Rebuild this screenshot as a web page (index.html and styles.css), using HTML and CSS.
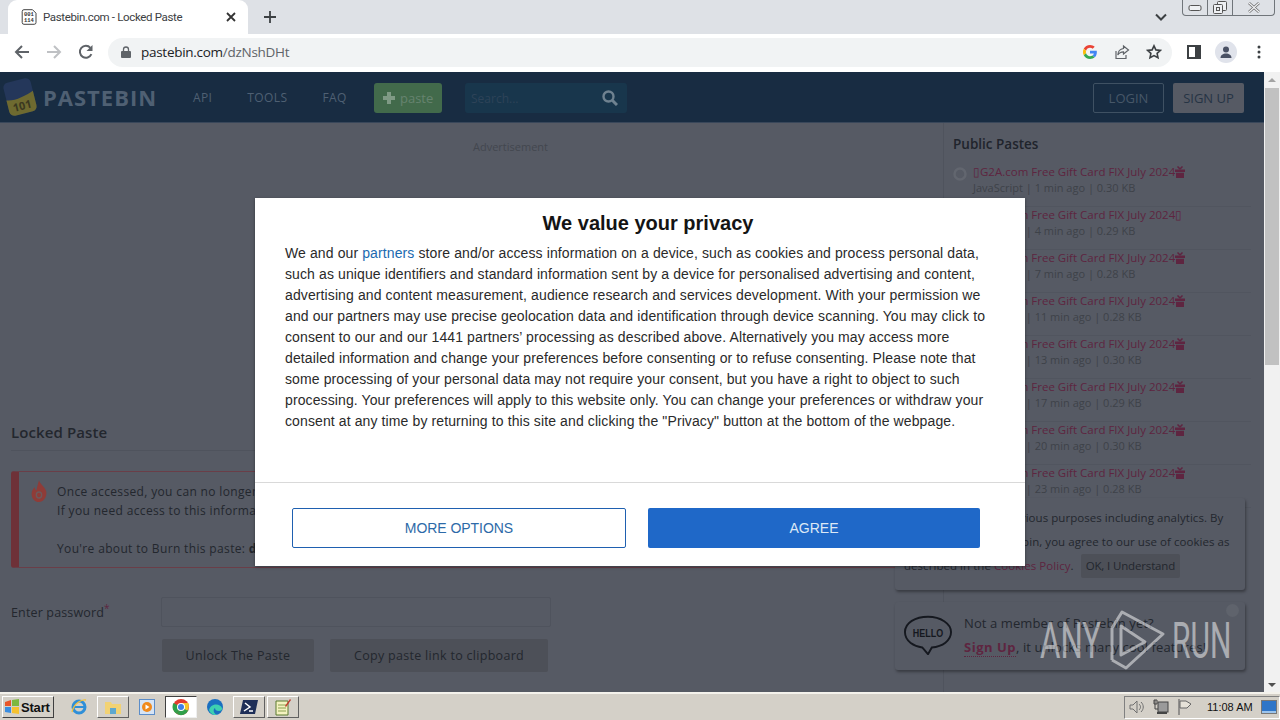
FILE: index.html
```html
<!DOCTYPE html>
<html lang="en">
<head>
<meta charset="utf-8">
<title>Pastebin.com - Locked Paste</title>
<link rel="stylesheet" href="styles.css">
</head>
<body>
<div class="tabbar">
  <div class="tab">
    <svg class="favicon" viewBox="0 0 16 16" width="16" height="16"><path d="M3 .7h8.500l3.500 3.500v9.300a1.800 1.800 0 0 1-1.800 1.800H3a1.800 1.800 0 0 1-1.800-1.800V2.500A1.800 1.800 0 0 1 3 .7z" fill="#fff" stroke="#444"/><text x="3" y="7" class="favtext">001</text><text x="3" y="13" class="favtext">114</text></svg>
    <span class="tab-title">Pastebin.com - Locked Paste</span>
    <svg class="tab-x" viewBox="0 0 10 10" width="10" height="10"><path d="M1 1l8 8M9 1l-8 8" stroke="#333" stroke-width="1.800"/></svg>
  </div>
  <svg class="plus" viewBox="0 0 12 12" width="12" height="12"><path d="M6 0v12M0 6h12" stroke="#3c4043" stroke-width="1.800"/></svg>
  <div class="tabbar-right">
    <svg class="chev" viewBox="0 0 12 8" width="12" height="8"><path d="M1 1.500l5 5 5-5" fill="none" stroke="#3c4043" stroke-width="2"/></svg>
    <div class="winctl">
      <div class="wc wc-min"><svg viewBox="0 0 14 6" width="14" height="6"><rect x="1" y=".5" width="12" height="5" rx="1.500" fill="#eef0f3" stroke="#555"/></svg></div>
      <div class="wc wc-max"><svg viewBox="0 0 14 13" width="14" height="13"><rect x="4.500" y=".5" width="9" height="9" rx="1" fill="#eef0f3" stroke="#555"/><rect x=".5" y="3.500" width="9" height="9" rx="1" fill="#eef0f3" stroke="#555"/><rect x="3.500" y="6.500" width="3" height="3" fill="none" stroke="#555"/></svg></div>
      <div class="wc wc-close"><svg viewBox="0 0 14 11" width="14" height="11"><path d="M2 1l10 9M12 1L2 10" stroke="#666" stroke-width="2.600"/><path d="M2 1l10 9M12 1L2 10" stroke="#f2f3f5" stroke-width="1.200"/></svg></div>
    </div>
  </div>
</div>
<div class="toolbar">
  <svg class="nav" viewBox="0 0 16 16" width="16" height="16"><path d="M15 8H2M8 2L2 8l6 6" fill="none" stroke="#5f6368" stroke-width="2"/></svg>
  <svg class="nav" viewBox="0 0 16 16" width="16" height="16"><path d="M1 8h13M8 2l6 6-6 6" fill="none" stroke="#bfc1c4" stroke-width="2"/></svg>
  <svg class="nav" viewBox="0 0 16 16" width="16" height="16"><path d="M13.400 10.200A6 6 0 1 1 12.400 3.800" fill="none" stroke="#5f6368" stroke-width="2"/><path d="M14.500 1v6h-6z" fill="#5f6368"/></svg>
  <div class="omnibox">
    <svg class="lock" viewBox="0 0 10 12" width="10" height="12"><path d="M2.500 5V3.500a2.500 2.500 0 0 1 5 0V5" fill="none" stroke="#5f6368" stroke-width="1.300"/><rect y="5" width="10" height="7" rx="1" fill="#5f6368"/></svg>
    <span class="url">pastebin.com<span class="url-path">/dzNshDHt</span></span>
    <svg class="g" viewBox="0 0 48 48" width="14" height="14"><path fill="#EA4335" d="M24 9.500c3.500 0 6.700 1.200 9.200 3.600l6.900-6.900C35.900 2.400 30.500 0 24 0 14.600 0 6.500 5.400 2.600 13.200l8 6.200C12.400 13.700 17.700 9.500 24 9.500z"/><path fill="#4285F4" d="M47.500 24.500c0-1.600-.1-3.100-.4-4.500H24v9h13.200c-.6 3-2.300 5.500-4.800 7.200l7.700 6c4.500-4.200 7.400-10.300 7.400-17.700z"/><path fill="#FBBC05" d="M10.600 28.600c-.5-1.400-.8-3-.8-4.600s.3-3.200.8-4.600l-8-6.200C.9 16.500 0 20.100 0 24s.9 7.500 2.600 10.800z"/><path fill="#34A853" d="M24 48c6.500 0 11.900-2.100 15.900-5.800l-7.700-6c-2.100 1.400-4.900 2.300-8.200 2.300-6.300 0-11.600-4.200-13.400-9.900l-8 6.200C6.500 42.600 14.600 48 24 48z"/></svg>
    <svg class="omni-ico" viewBox="0 0 16 16" width="16" height="16"><path d="M2 7v7.500h10V11" fill="none" stroke="#5f6368" stroke-width="1.200"/><path d="M9.500 2l5 4-5 4V7.800C7 7.800 5 8.800 3.800 11 4 7.500 6 5 9.500 4.500z" fill="none" stroke="#5f6368" stroke-width="1.200"/></svg>
    <svg class="omni-ico star" viewBox="0 0 16 16" width="16" height="16"><path d="M8 1.800l1.900 4.100 4.500.5-3.300 3 .9 4.400L8 11.600l-4 2.200.9-4.400-3.300-3 4.500-.5z" fill="none" stroke="#3c4043" stroke-width="1.600"/></svg>
  </div>
  <svg class="side-ico" viewBox="0 0 14 14" width="14" height="14"><rect x="1" y="1" width="12" height="12" fill="#fff" stroke="#3c4043" stroke-width="2"/><rect x="8" y="1" width="5" height="12" fill="#3c4043"/></svg>
  <div class="avatar"><svg viewBox="0 0 16 16" width="16" height="16"><circle cx="8" cy="5.500" r="3" fill="#4a5164"/><path d="M2.500 14c0-3 2.500-4.500 5.500-4.500s5.500 1.500 5.500 4.500z" fill="#4a5164"/></svg></div>
  <svg class="dots" viewBox="0 0 4 14" width="4" height="14"><circle cx="2" cy="2" r="1.500" fill="#3c4043"/><circle cx="2" cy="7" r="1.500" fill="#3c4043"/><circle cx="2" cy="12" r="1.500" fill="#3c4043"/></svg>
</div>

<div class="viewport">
  <div class="page">
    <header class="site-header">
      <svg class="logo" viewBox="0 0 36 40" width="36" height="40"><g transform="rotate(-14 18 20)"><rect x="4" y="3" width="28" height="34" rx="5" fill="#24375a"/><path d="M4 20c8 3 20 0 28-3v15a5 5 0 0 1-5 5H9a5 5 0 0 1-5-5z" fill="#6e6a30"/><text x="18" y="33" class="logo-num">101</text></g></svg>
      <span class="brand">PASTEBIN</span>
      <nav class="nav-links"><span>API</span><span>TOOLS</span><span>FAQ</span></nav>
      <div class="btn-paste"><svg viewBox="0 0 14 14" width="14" height="14"><path d="M7 1v12M1 7h12" stroke="#7f9a85" stroke-width="4"/></svg><span>paste</span></div>
      <div class="searchbox"><span>Search...</span><svg viewBox="0 0 16 16" width="16" height="16"><circle cx="6.500" cy="6.500" r="5" fill="none" stroke="#6f8290" stroke-width="2.400"/><path d="M10.500 10.500l4.500 4.500" stroke="#6f8290" stroke-width="3"/></svg></div>
      <div class="header-right"><span class="btn-login">LOGIN</span><span class="btn-signup">SIGN UP</span></div>
    </header>
    <div class="content">
      <main class="main-col">
        <div class="ad-label">Advertisement</div>
        <h1 class="locked-title">Locked Paste</h1>
        <div class="alert">
          <svg class="flame" viewBox="0 0 18 22" width="16" height="22" preserveAspectRatio="none"><path d="M9 0c1 4 6 6 8 11 1.500 5-2.500 11-8 11S-.5 17 1 12c.5-2 2-3.500 3-5 .5 2 1 3 2 3.500C7 7 8 3 9 0z" fill="#8f3c38"/><circle cx="9" cy="15" r="3" fill="none" stroke="#6c5a5c" stroke-width="1.500"/></svg>
          <div class="alert-text">
            <p>Once accessed, you can no longer view this paste again.</p>
            <p>If you need access to this information later, save it now.</p>
            <p class="alert-burn">You're about to Burn this paste: <b>dzNshDHt</b></p>
          </div>
        </div>
        <div class="form-row">
          <label class="pw-label">Enter password<sup>*</sup></label>
          <div class="pw-input"></div>
        </div>
        <div class="form-actions">
          <span class="btn-dark btn-unlock">Unlock The Paste</span>
          <span class="btn-dark btn-copy">Copy paste link to clipboard</span>
        </div>
      </main>
      <aside class="side-col">
        <h2 class="side-title">Public Pastes</h2>
        <ul class="paste-list">
          <li class="paste-row"><svg class="globe" viewBox="0 0 14 14" width="14" height="14"><circle cx="7" cy="7" r="5.500" fill="none" stroke="#62666f" stroke-width="2.500"/></svg><div><div class="paste-name">▯G2A.com Free Gift Card FIX July 2024<svg class="gift" viewBox="0 0 10 12" width="10" height="12"><path d="M0 3.500h10v2.500H0zM1 6.800h8V12H1z" fill="#5e2540"/><path d="M5 3L2.500.5M5 3L7.500.5" stroke="#5e2540" stroke-width="1.500"/></svg></div><div class="paste-meta">JavaScript | 1 min ago | 0.30 KB</div></div></li>
          <li class="paste-row"><svg class="globe" viewBox="0 0 14 14" width="14" height="14"><circle cx="7" cy="7" r="5.500" fill="none" stroke="#62666f" stroke-width="2.500"/></svg><div><div class="paste-name">▯G2A.com Free Gift Card FIX July 2024▯</div><div class="paste-meta">JavaScript | 4 min ago | 0.29 KB</div></div></li>
          <li class="paste-row"><svg class="globe" viewBox="0 0 14 14" width="14" height="14"><circle cx="7" cy="7" r="5.500" fill="none" stroke="#62666f" stroke-width="2.500"/></svg><div><div class="paste-name">▯G2A.com Free Gift Card FIX July 2024<svg class="gift" viewBox="0 0 10 12" width="10" height="12"><path d="M0 3.500h10v2.500H0zM1 6.800h8V12H1z" fill="#5e2540"/><path d="M5 3L2.500.5M5 3L7.500.5" stroke="#5e2540" stroke-width="1.500"/></svg></div><div class="paste-meta">JavaScript | 7 min ago | 0.28 KB</div></div></li>
          <li class="paste-row"><svg class="globe" viewBox="0 0 14 14" width="14" height="14"><circle cx="7" cy="7" r="5.500" fill="none" stroke="#62666f" stroke-width="2.500"/></svg><div><div class="paste-name">▯G2A.com Free Gift Card FIX July 2024<svg class="gift" viewBox="0 0 10 12" width="10" height="12"><path d="M0 3.500h10v2.500H0zM1 6.800h8V12H1z" fill="#5e2540"/><path d="M5 3L2.500.5M5 3L7.500.5" stroke="#5e2540" stroke-width="1.500"/></svg></div><div class="paste-meta">JavaScript | 11 min ago | 0.28 KB</div></div></li>
          <li class="paste-row"><svg class="globe" viewBox="0 0 14 14" width="14" height="14"><circle cx="7" cy="7" r="5.500" fill="none" stroke="#62666f" stroke-width="2.500"/></svg><div><div class="paste-name">▯G2A.com Free Gift Card FIX July 2024<svg class="gift" viewBox="0 0 10 12" width="10" height="12"><path d="M0 3.500h10v2.500H0zM1 6.800h8V12H1z" fill="#5e2540"/><path d="M5 3L2.500.5M5 3L7.500.5" stroke="#5e2540" stroke-width="1.500"/></svg></div><div class="paste-meta">JavaScript | 13 min ago | 0.30 KB</div></div></li>
          <li class="paste-row"><svg class="globe" viewBox="0 0 14 14" width="14" height="14"><circle cx="7" cy="7" r="5.500" fill="none" stroke="#62666f" stroke-width="2.500"/></svg><div><div class="paste-name">▯G2A.com Free Gift Card FIX July 2024<svg class="gift" viewBox="0 0 10 12" width="10" height="12"><path d="M0 3.500h10v2.500H0zM1 6.800h8V12H1z" fill="#5e2540"/><path d="M5 3L2.500.5M5 3L7.500.5" stroke="#5e2540" stroke-width="1.500"/></svg></div><div class="paste-meta">JavaScript | 17 min ago | 0.29 KB</div></div></li>
          <li class="paste-row"><svg class="globe" viewBox="0 0 14 14" width="14" height="14"><circle cx="7" cy="7" r="5.500" fill="none" stroke="#62666f" stroke-width="2.500"/></svg><div><div class="paste-name">▯G2A.com Free Gift Card FIX July 2024<svg class="gift" viewBox="0 0 10 12" width="10" height="12"><path d="M0 3.500h10v2.500H0zM1 6.800h8V12H1z" fill="#5e2540"/><path d="M5 3L2.500.5M5 3L7.500.5" stroke="#5e2540" stroke-width="1.500"/></svg></div><div class="paste-meta">JavaScript | 20 min ago | 0.30 KB</div></div></li>
          <li class="paste-row"><svg class="globe" viewBox="0 0 14 14" width="14" height="14"><circle cx="7" cy="7" r="5.500" fill="none" stroke="#62666f" stroke-width="2.500"/></svg><div><div class="paste-name">▯G2A.com Free Gift Card FIX July 2024<svg class="gift" viewBox="0 0 10 12" width="10" height="12"><path d="M0 3.500h10v2.500H0zM1 6.800h8V12H1z" fill="#5e2540"/><path d="M5 3L2.500.5M5 3L7.500.5" stroke="#5e2540" stroke-width="1.500"/></svg></div><div class="paste-meta">JavaScript | 23 min ago | 0.28 KB</div></div></li>
        </ul>
      </aside>
    </div>

    <div class="notice cookie-notice">We use cookies for various purposes including analytics. By <span class="tight">continuing to use Past</span>ebin, you agree to our use of cookies as described in the <span class="crimson">Cookies Policy</span>. <span class="ok-btn">OK, I Understand</span></div>
    <div class="notice hello-notice">
      <svg class="hello" viewBox="0 0 50 40" width="48" height="40"><path d="M25 1C12 1 1 7 1 17s10 15 18 16l6 7 4-7c11-1 20-7 20-16S38 1 25 1z" fill="none" stroke="#15181f" stroke-width="2"/><text x="9" y="22" class="hello-text" textLength="32" lengthAdjust="spacingAndGlyphs">HELLO</text></svg>
      <div class="hello-body">
        <div>Not a member of Pastebin yet?</div>
        <div><a class="signup">Sign Up</a>, it unlocks many cool features!</div>
      </div>
      <span class="hello-close"></span>
    </div>
  </div>
  <div class="scrollbar">
    <span class="arrow-up"></span>
    <span class="thumb"></span>
    <span class="arrow-down"></span>
  </div>

  <div class="modal">
    <h2 class="modal-title">We value your privacy</h2>
    <p class="modal-text">We and our <span class="partners">partners</span> store and/or access information on a device, such as cookies and process personal data, such as unique identifiers and standard information sent by a device for personalised advertising and content, advertising and content measurement, audience research and services development. With your permission we and our partners may use precise geolocation data and identification through device scanning. You may click to consent to our and our 1441 partners’ processing as described above. Alternatively you may access more detailed information and change your preferences before consenting or to refuse consenting. Please note that some processing of your personal data may not require your consent, but you have a right to object to such processing. Your preferences will apply to this website only. You can change your preferences or withdraw your consent at any time by returning to this site and clicking the "Privacy" button at the bottom of the webpage.</p>
    <div class="modal-foot">
      <span class="m-btn m-more">MORE OPTIONS</span>
      <span class="m-btn m-agree">AGREE</span>
    </div>
  </div>

  <div class="watermark">
    <span class="wm-word wm-any">ANY</span>
    <svg class="wm-play" viewBox="0 0 60 62" width="60" height="62"><path d="M2 50V18L12 2L53 24L16 58L2 50" fill="none" stroke="rgba(255,255,255,.5)" stroke-width="3" stroke-linejoin="round"/><path d="M11 16V45L35 32z" fill="none" stroke="rgba(255,255,255,.5)" stroke-width="3" stroke-linejoin="round"/></svg>
    <span class="wm-word wm-run">RUN</span>
  </div>
</div>

<footer class="taskbar">
  <div class="start"><svg viewBox="0 0 16 16" width="16" height="16"><path d="M1 3l6-2v6H1z" fill="#e8562a"/><path d="M8 1l7-1v7H8z" fill="#7cb83e"/><path d="M1 8h6v6l-6-1z" fill="#3a8de0"/><path d="M8 8h7v7l-7-1z" fill="#f5c12e"/></svg><b>Start</b></div>
  <div class="tb-items">
    <span class="tb-item flat"><svg viewBox="0 0 18 18" width="18" height="18"><circle cx="9" cy="9" r="6" fill="none" stroke="#2f8fd8" stroke-width="3"/><path d="M3 9h12" stroke="#2f8fd8" stroke-width="2"/><path d="M2 14C4 5 12 1 16 2" fill="none" stroke="#f0c040" stroke-width="1.300"/></svg></span>
    <span class="tb-item raised"><svg viewBox="0 0 18 18" width="18" height="18"><path d="M1 4h6l1 2h9v10H1z" fill="#f2d273"/><path d="M6 10h6v6H6z" fill="#5fa8cf"/></svg></span>
    <span class="tb-item flat"><svg viewBox="0 0 16 16" width="16" height="16"><rect x=".5" y=".5" width="15" height="15" fill="#d6e4f5" stroke="#5b8dc9"/><circle cx="8" cy="8" r="5" fill="#f08a1c"/><path d="M6.500 5.500l4 2.500-4 2.500z" fill="#fff"/></svg></span>
    <span class="tb-item pressed"><svg viewBox="0 0 18 18" width="18" height="18"><circle cx="9" cy="9" r="8" fill="#e33b2e"/><path d="M9 9l7.500 3A8 8 0 0 1 5 16z" fill="#2fa04a"/><path d="M9 9L5 16A8 8 0 0 1 1.500 5z" fill="#2fa04a"/><path d="M9 5h7.300a8 8 0 0 1-1 7.500L9 9z" fill="#f7c52b"/><circle cx="9" cy="9" r="4" fill="#fff"/><circle cx="9" cy="9" r="3" fill="#3f7fe8"/></svg></span>
    <span class="tb-item flat"><svg viewBox="0 0 18 18" width="18" height="18"><circle cx="9" cy="9" r="8" fill="#1a6fc0"/><path d="M3 12c2-7 11-7 13-2 .5 2-1 3-3 3-2.500 0-4-1-4-3-2 1-2 5 2 7-4 .5-7-2-8-5z" fill="#3dd0b0"/></svg></span>
    <span class="tb-item raised"><svg viewBox="0 0 18 16" width="18" height="16"><path d="M3 1h15l-3 14H0z" fill="#1f2f58"/><path d="M5 4l5 4-6 4M9 12h4" fill="none" stroke="#fff" stroke-width="1.500"/></svg></span>
    <span class="tb-item raised"><svg viewBox="0 0 18 18" width="18" height="18"><path d="M2 3h12v14H2z" fill="#f4f2c0" stroke="#5a7a30"/><path d="M4 7h8M4 10h8M4 13h8" stroke="#8aa050"/><path d="M11 8l5-7 1 1-5 7z" fill="#c0392b"/></svg></span>
  </div>
  <div class="tray">
    <svg viewBox="0 0 16 16" width="16" height="16"><path d="M1 6h3l4-4v12l-4-4H1z" fill="#d4d0c8" stroke="#707070"/><path d="M10 5c2 2 2 4 0 6M12 3c3 3 3 7 0 10" fill="none" stroke="#707070"/></svg>
    <svg viewBox="0 0 16 16" width="16" height="16"><rect x="5" y="3" width="10" height="10" fill="#9a9a9a" stroke="#444"/><path d="M2 1v9h3M1 1h3v4H1z" fill="none" stroke="#444"/><path d="M4 14h10" stroke="#444" stroke-width="2"/></svg>
    <svg viewBox="0 0 16 16" width="16" height="16"><path d="M2 0v16" stroke="#666" stroke-width="1.200"/><path d="M3 2h6l5 3-4 4H3z" fill="#e6e2d8" stroke="#666"/></svg>
    <span class="clock">11:08 AM</span>
    <svg viewBox="0 0 16 14" width="16" height="14"><rect x=".5" y=".5" width="15" height="13" fill="#2e75c8" stroke="#777"/><path d="M1 11h14v2H1z" fill="#9cc4ec"/></svg>
  </div>
</footer>
</body>
</html>
```

FILE: styles.css
```css
* { box-sizing: border-box; }
html, body { margin: 0; padding: 0; width: 1280px; height: 720px; overflow: hidden; font-family: "Open Sans", "Noto Sans", sans-serif; }
body { display: flex; flex-direction: column; background: #d4d0c8; }
h1, h2, p, ul { margin: 0; padding: 0; }
svg { display: block; flex: none; }

.tabbar { height: 34px; background: #dee1e6; display: flex; align-items: center; padding-left: 8px; flex: none; }
.tab { width: 240px; height: 34px; background: #fff; border-radius: 9px 9px 0 0; display: flex; align-items: center; padding: 0 12px 0 13px; gap: 6px; }
.favicon { width: 16px; height: 16px; }
.favtext { font: 700 5.500px "Liberation Mono", monospace; fill: #333; }
.tab-title { font: 11.500px "Roboto", sans-serif; color: #3c4043; flex: 1; white-space: nowrap; letter-spacing: -.35px; }
.plus { margin-left: 16px; }
.tabbar-right { margin-left: auto; display: flex; align-items: flex-start; height: 34px; padding-right: 5px; }
.chev { margin: 13px 15px 0 0; }
.winctl { display: flex; height: 16px; border: 1px solid #70757a; border-top: 0; border-radius: 0 0 4px 4px; }
.wc { display: flex; align-items: center; justify-content: center; height: 15px; border-right: 1px solid #70757a; }
.wc-min { width: 25px; }
.wc-max { width: 25px; }
.wc-close { width: 41px; border-right: 0; }

.toolbar { height: 38px; background: #fff; display: flex; align-items: center; padding: 0 0 2px 14px; flex: none; }
.nav { margin-right: 16px; }
.omnibox { width: 1064px; height: 29px; margin-left: -2px; background: #f1f3f4; border-radius: 15px; display: flex; align-items: center; padding-left: 13px; }
.lock { margin-right: 10px; }
.url { font: 13.500px "Open Sans", sans-serif; color: #202124; flex: 1; letter-spacing: -.28px; }
.url-path { color: #5f6368; }
.g { margin-right: 17px; }
.omni-ico { margin-right: 16px; }
.star { margin-right: 10px; }
.side-ico { margin-left: 15px; }
.avatar { width: 22px; height: 22px; margin-left: 14px; border-radius: 50%; background: #e0e3eb; display: flex; align-items: center; justify-content: center; }
.dots { margin-left: 20px; }

.viewport { position: relative; height: 620px; display: flex; flex: none; background: #565a64; }
.page { position: relative; width: 1264px; height: 620px; overflow: hidden; }
.site-header { height: 51px; background: #182c42; border-bottom: 1px solid #39475a; display: flex; align-items: center; padding-left: 2px; }
.logo-num { font: 700 11px "Open Sans", sans-serif; fill: #3a3820; text-anchor: middle; }
.brand { font: 700 22px "Open Sans", sans-serif; color: #4f6073; letter-spacing: 1px; margin-left: 5px; width: 150px; }
.nav-links { display: flex; gap: 35px; font-size: 12px; color: #4f6073; width: 181px; letter-spacing: .4px; }
.btn-paste { width: 68px; height: 30px; margin-top: 2px; background: #426a4b; border-radius: 3px; display: flex; align-items: center; gap: 4px; padding-left: 8px; font-size: 13px; color: #66836f; }
.searchbox { width: 162px; height: 30px; margin: 2px 0 0 23px; background: #18364c; display: flex; align-items: center; justify-content: space-between; padding: 0 9px 0 6px; font-size: 12px; color: #2d4358; border-radius: 3px; }
.header-right { margin: 2px 0 0 auto; display: flex; gap: 9px; padding-right: 20px; }
.btn-login, .btn-signup { height: 30px; display: flex; align-items: center; justify-content: center; font-size: 13px; border-radius: 2px; }
.btn-login { width: 71px; border: 1px solid #3f5163; color: #475768; }
.btn-signup { width: 71px; background: #565a64; color: #263444; }

.content { display: flex; height: 569px; }
.main-col { flex: 1; min-width: 0; padding: 0 11px; position: relative; }
.ad-label { text-align: center; font-size: 11px; color: #43474f; padding-top: 16px; height: 297px; margin-left: 78px; }
.locked-title { font-size: 15px; font-weight: 600; color: #23272e; height: 31px; line-height: 24px; border-bottom: 1px solid #4f535d; width: 900px; letter-spacing: .1px; }
.alert { margin-top: 20px; height: 97px; width: 900px; border: 1px solid #6a3e48; border-left: 8px solid #6e3138; border-radius: 3px; display: flex; padding: 10px 0 0 12px; gap: 10px; }
.flame { margin-top: -2px; }
.alert-text { font-size: 12px; line-height: 19px; color: #23272e; letter-spacing: .35px; white-space: nowrap; }
.alert-burn { margin-top: 19px; }
.form-row { margin-top: 29px; display: flex; align-items: center; height: 30px; }
.pw-label { width: 150px; font-size: 12.500px; color: #23272e; letter-spacing: .15px; }
.pw-label sup { color: #5e2540; font-size: 10px; line-height: 0; }
.pw-input { width: 390px; height: 30px; border: 1px solid #4f535d; border-radius: 2px; }
.form-actions { margin: 12px 0 0 151px; display: flex; gap: 16px; }
.btn-dark { height: 33px; background: #4d5058; border-radius: 2px; display: flex; align-items: center; justify-content: center; font-size: 12.500px; color: #23272e; letter-spacing: .3px; }
.btn-unlock { width: 152px; }
.btn-copy { width: 218px; }

.side-col { width: 321px; border-left: 1px solid #4f535d; padding: 0 0 0 9px; }
.side-title { font-size: 13.500px; font-weight: 600; color: #20242c; height: 33px; padding-top: 11px; line-height: 20px; }
.paste-list { list-style: none; margin-top: 8px; }
.paste-row { height: 43px; display: flex; gap: 6px; border-bottom: 1px solid #51555f; width: 298px; }
.globe { margin-top: 3px; }
.paste-name { font-size: 11.500px; line-height: 16px; color: #5e2540; display: flex; align-items: center; white-space: nowrap; }
.paste-meta { font-size: 11px; line-height: 16px; color: #3e4249; white-space: nowrap; }

.notice { position: absolute; left: 895px; width: 350px; background: #565a64; border-radius: 3px; box-shadow: 1px 2px 3px rgba(0,0,0,.35); color: #23272e; }
.cookie-notice { top: 426px; height: 92px; padding: 8px 9px; font-size: 11.500px; line-height: 24px; letter-spacing: .05px; }
.tight { letter-spacing: -.32px; }
.crimson { color: #5e2540; }
.ok-btn { display: inline-block; background: #4d5058; line-height: 24px; padding: 0 5px; margin-left: 4px; border-radius: 2px; letter-spacing: -.15px; }
.hello-notice { top: 530px; height: 68px; display: flex; padding: 9px 9px; gap: 12px; font-size: 13px; line-height: 24px; letter-spacing: .1px; }
.hello-text { font: 700 12px "Liberation Sans", sans-serif; fill: #15181f; }
.hello { margin-top: 4px; }
.signup { color: #5e2540; font-weight: 700; letter-spacing: .5px; border-bottom: 1px dotted #5e2540; }
.hello-close { position: absolute; right: 6px; top: 2px; width: 13px; height: 13px; border-radius: 50%; background: #5f636c; }

.scrollbar { width: 16px; height: 620px; background: #f1f1f1; display: flex; flex-direction: column; align-items: center; }
.arrow-up { margin-top: 6px; border: 4px solid transparent; border-top: 0; border-bottom: 4px solid #a3a3a3; }
.thumb { margin-top: 6px; width: 14px; height: 277px; background: #c1c1c1; }
.arrow-down { margin-top: auto; margin-bottom: 5px; border: 4px solid transparent; border-bottom: 0; border-top: 4px solid #505050; }

.modal { position: absolute; left: 255px; top: 126px; width: 770px; height: 368px; background: #fff; box-shadow: 0 1px 3px rgba(0,0,0,.4); display: flex; flex-direction: column; font-family: "Liberation Sans", Arial, sans-serif; }
.modal-title { text-align: center; font-size: 20px; font-weight: 700; color: #141414; padding: 12px 0 0 16px; line-height: 26px; height: 45px; }
.modal-text { font-size: 14px; line-height: 21px; color: #2a2a2a; padding: 0 37px 0 30px; height: 239px; letter-spacing: .11px; }
.partners { color: #1b6ab0; }
.modal-foot { flex: 1; border-top: 1px solid #d9d9d9; display: flex; gap: 22px; padding: 25px 0 0 37px; }
.m-btn { height: 40px; display: flex; align-items: center; justify-content: center; font-size: 14px; border-radius: 2px; }
.m-more { width: 334px; border: 1px solid #1f60b0; color: #2d6aa8; letter-spacing: -.05px; }
.m-agree { width: 332px; background: #1f68c8; color: #dce8f6; }

.watermark { position: absolute; left: 1040px; top: 538px; display: flex; align-items: center; height: 62px; color: rgba(255,255,255,.5); }
.wm-word { font: 400 50px/1 "Roboto", sans-serif; display: inline-block; transform-origin: left center; white-space: nowrap; }
.wm-any { width: 62px; transform: scaleX(.625); }
.wm-play { margin: 0 2px 0 8px; }
.wm-run { width: 58px; transform: scaleX(.6); }

.taskbar { height: 28px; background: #d4d0c8; border-top: 2px solid #f4f2ec; display: flex; align-items: center; flex: none; padding-left: 2px; }
.start { width: 52px; height: 22px; background: #d4d0c8; border: 1px solid; border-color: #fff #404040 #404040 #fff; display: flex; align-items: center; gap: 1px; padding-left: 1px; font: 700 13px "Liberation Sans", sans-serif; color: #111; letter-spacing: -.2px; }
.tb-items { display: flex; margin-left: 9px; gap: 2px; }
.tb-item { width: 32px; height: 22px; display: flex; align-items: center; justify-content: center; }
.raised { border: 1px solid; border-color: #fff #606060 #606060 #fff; }
.pressed { background: #fff; border: 1px solid; border-color: #404040 #eee #eee #404040; }
.tray { margin-left: auto; width: 156px; height: 23px; border: 1px solid; border-color: #808080 #fff #fff #808080; display: flex; align-items: center; gap: 8px; padding-left: 4px; }
.clock { font: 11px "Liberation Sans", sans-serif; color: #111; margin-left: 6px; white-space: nowrap; }
```
